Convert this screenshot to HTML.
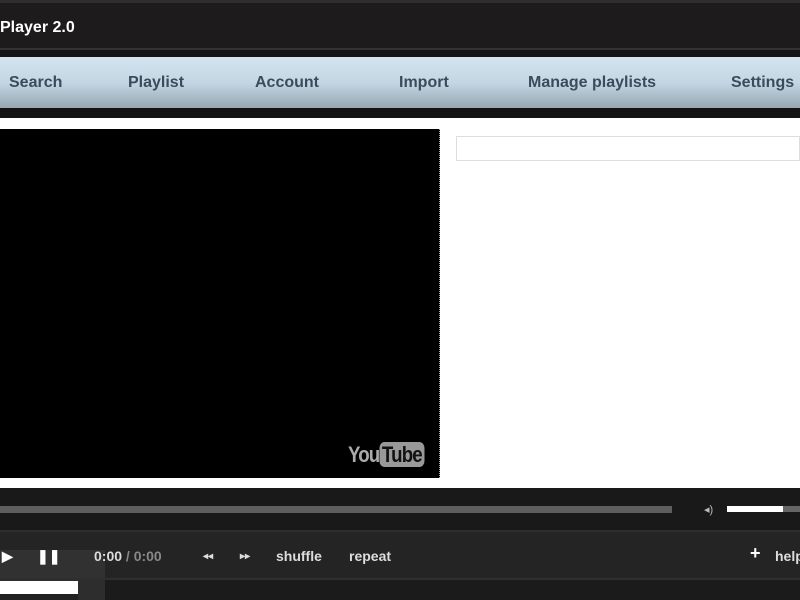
<!DOCTYPE html><html><head><style>
*{margin:0;padding:0;box-sizing:border-box}
body{width:800px;height:600px;overflow:hidden;background:#1b1b1b;font-family:"Liberation Sans",sans-serif;position:relative}
div{position:absolute}
.nav span{position:absolute;top:17px;font-size:16px;font-weight:bold;color:#3c4b5b}
.c{color:#ddd;font-weight:bold;font-size:14px;position:absolute;top:16px;z-index:3}
</style></head><body>
<div style="left:0;top:0;width:800px;height:50px;background:#1d1b1b;border-top:3px solid #2e2e2e"></div>
<div style="left:0;top:6px;color:#fff;font-size:16px;font-weight:bold;top:19px">Player 2.0</div>
<div style="left:0;top:48px;width:800px;height:2px;background:#333"></div>
<div style="left:0;top:50px;width:800px;height:7px;background:#141414"></div>
<div class="nav" style="left:0;top:57px;width:800px;height:51px;background:linear-gradient(#d3e4f0,#c4d6e3 50%,#97a8b4)">
<span style="left:9px">Search</span><span style="left:128px">Playlist</span><span style="left:255px">Account</span><span style="left:399px">Import</span><span style="left:528px">Manage playlists</span><span style="left:731px">Settings</span></div>
<div style="left:0;top:108px;width:800px;height:10px;background:#141414"></div>
<div style="left:0;top:118px;width:800px;height:370px;background:#fff"></div>
<div style="left:0;top:129px;width:440px;height:349px;background:#000;border-right:1px dotted #aaa"></div>
<div style="left:348px;top:442px;font-size:22px;font-weight:bold;color:#aaa;letter-spacing:-1px;transform:scaleX(.85);transform-origin:left">You<span style="background:#999;color:#111;border-radius:6px;padding:0 3px">Tube</span></div>
<div style="left:456px;top:136px;width:344px;height:25px;border:1px solid #ddd;background:#fff"></div>
<div style="left:0;top:488px;width:800px;height:42px;background:#191919"></div>
<div style="left:0;top:506px;width:672px;height:7px;background:#5e5e5e"></div>
<div style="left:704px;top:503px;color:#bbb;font-size:11px">◂)</div>
<div style="left:727px;top:506px;width:56px;height:6px;background:#fff"></div>
<div style="left:783px;top:506px;width:17px;height:6px;background:#666"></div>
<div style="left:0;top:550px;width:105px;height:50px;background:#3a3a3a;opacity:.6;z-index:1"></div>
<div style="left:0;top:581px;width:78px;height:19px;background:#fff;border-bottom:6px solid #222;z-index:1"></div>
<div style="left:0;top:530px;width:800px;height:50px;border-top:2px solid #2e2e2e;border-bottom:2px solid #2e2e2e;z-index:2">
<span class="c" style="left:2px;color:#fff">▶</span><span class="c" style="left:37px;color:#fff">❚❚</span>
<span class="c" style="left:94px">0:00 <span style="color:#888;font-weight:bold">/ 0:00</span></span>
<span class="c" style="left:203px;font-size:10px;top:19px">◂◂</span><span class="c" style="left:240px;font-size:10px;top:19px">▸▸</span>
<span class="c" style="left:276px">shuffle</span><span class="c" style="left:349px">repeat</span>
<span class="c" style="left:750px;font-size:18px;top:11px;color:#fff">+</span><span class="c" style="left:775px">help</span></div>
<div style="left:0;top:530px;width:800px;height:50px;background:#242424;z-index:0"></div>
</body></html>
